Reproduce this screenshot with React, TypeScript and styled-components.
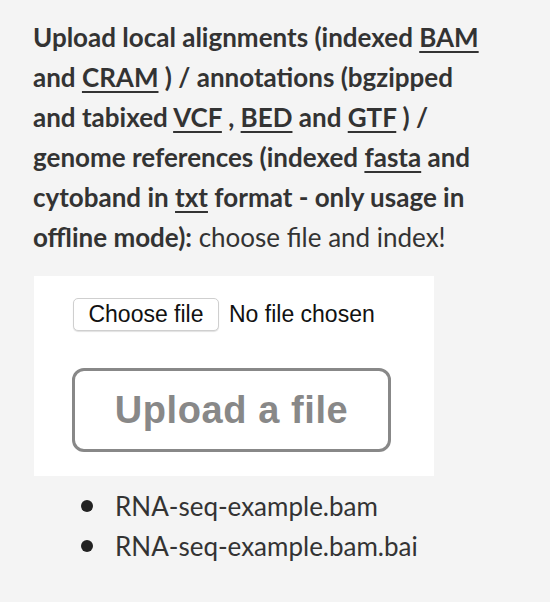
import styled, { createGlobalStyle } from "styled-components";

const GlobalStyle = createGlobalStyle`
  html, body {
    margin: 0;
    padding: 0;
    background: #f4f4f4;
  }
  body {
    font-family: Lato, "Open Sans", sans-serif;
    color: #333;
  }
`;

const Page = styled.div`
  width: 550px;
  padding: 17px 0 0 33px;
  box-sizing: border-box;
`;

const Intro = styled.p`
  margin: 0;
  width: 456px;
  font-size: 26px;
  line-height: 40px;
  font-weight: 400;
`;

const Strong = styled.b`
  font-weight: 700;
`;

const Ext = styled.a`
  color: inherit;
  text-decoration: underline;
  text-decoration-thickness: 2px;
  text-underline-offset: 4px;
`;

const UploadBox = styled.div`
  margin: 19px 0 0 1px;
  width: 400px;
  height: 200px;
  background: #fff;
  box-sizing: border-box;
  padding: 22px 0 0 39px;
  display: flex;
  flex-direction: column;
  align-items: flex-start;
  gap: 37px;
`;

const PickerRow = styled.div`
  display: flex;
  align-items: center;
  gap: 10px;
  font-family: "Liberation Sans", Arial, sans-serif;
  font-size: 23px;
  color: #111;
`;

const ChooseButton = styled.button`
  height: 33px;
  width: 146px;
  padding: 0;
  font-family: "Liberation Sans", Arial, sans-serif;
  font-size: 23px;
  color: #111;
  background: #fff;
  border: 1px solid #cfcfcf;
  border-radius: 5px;
  box-shadow: 0 1px 1px rgba(0, 0, 0, 0.12);
`;

const UploadButton = styled.button`
  width: 319px;
  height: 84px;
  margin-left: -1px;
  padding: 0;
  background: #fff;
  border: 3px solid #888;
  border-radius: 12px;
  color: #888;
  font-family: "Liberation Sans", Arial, sans-serif;
  font-weight: 700;
  font-size: 38px;
  letter-spacing: 0.6px;
`;

const FileList = styled.ul`
  margin: 10px 0 0;
  padding: 0 0 0 48px;
  font-size: 26px;
  line-height: 40px;
  list-style: none;
`;

const FileItem = styled.li`
  display: flex;
  align-items: center;
  gap: 22px;
  &::before {
    content: "";
    flex: none;
    width: 12px;
    height: 12px;
    border-radius: 50%;
    background: #222;
  }
`;

export default function App() {
  return (
    <>
      <GlobalStyle />
      <Page>
        <Intro>
          <Strong>
            Upload local alignments (indexed <Ext>BAM</Ext> and <Ext>CRAM</Ext> )
            / annotations (bgzipped and tabixed <Ext>VCF</Ext> , <Ext>BED</Ext>{" "}
            and <Ext>GTF</Ext> ) / genome references (indexed <Ext>fasta</Ext>{" "}
            and cytoband in <Ext>txt</Ext> format - only usage in offline mode):
          </Strong>{" "}
          choose file and index!
        </Intro>
        <UploadBox>
          <PickerRow>
            <ChooseButton>Choose file</ChooseButton>
            <span>No file chosen</span>
          </PickerRow>
          <UploadButton>Upload a file</UploadButton>
        </UploadBox>
        <FileList>
          <FileItem>RNA-seq-example.bam</FileItem>
          <FileItem>RNA-seq-example.bam.bai</FileItem>
        </FileList>
      </Page>
    </>
  );
}
